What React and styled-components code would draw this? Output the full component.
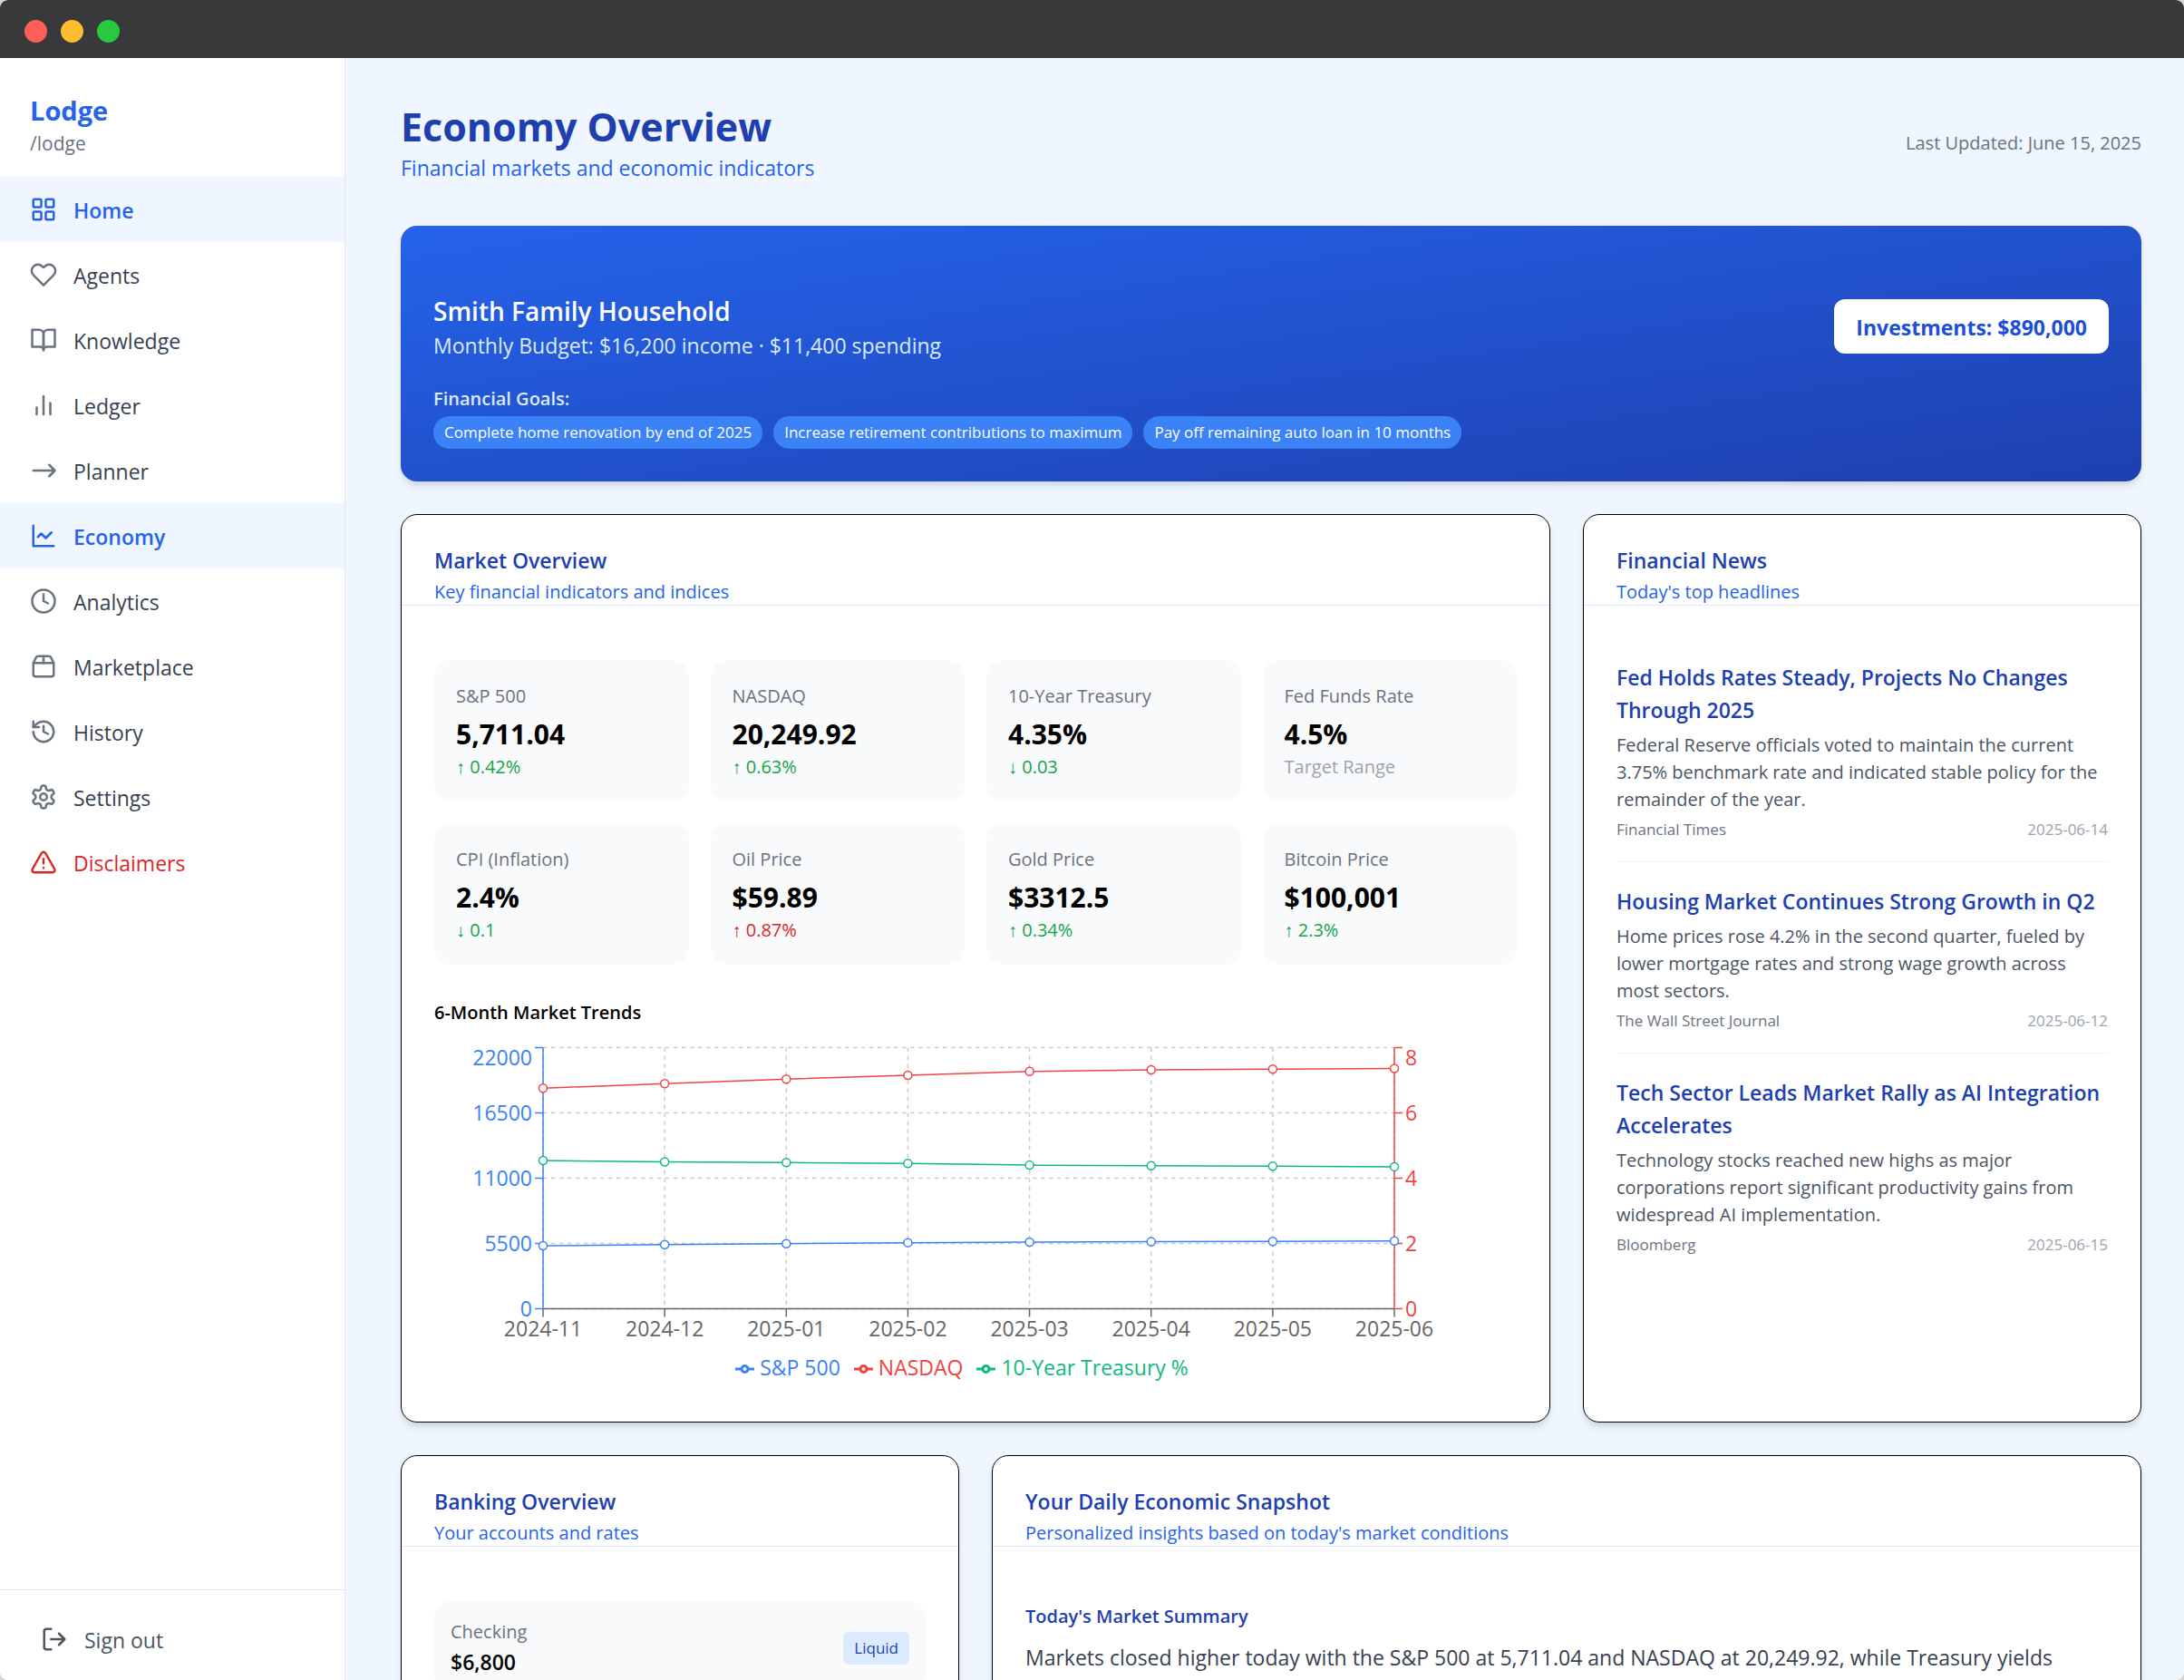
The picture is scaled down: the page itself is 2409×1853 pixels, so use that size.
import React from 'react';
import styled, { createGlobalStyle } from 'styled-components';

const GlobalStyle = createGlobalStyle`
  * {
    box-sizing: border-box;
  }

  body {
    margin: 0;
    background: #d4d4d4;
    color: #000;
    font-family: "Segoe UI", "Open Sans", "Noto Sans", sans-serif;
    font-size: 23px;
    line-height: 36px;
  }

  h1, h2, h3, h4, p, ul {
    margin: 0;
    padding: 0;
  }
`;

const Window = styled.div`
  display: flex;
  flex-direction: column;
  height: 100vh;
  overflow: hidden;
  border-radius: 9px;
  background: #fff;
`;

const TitleBar = styled.div`
  display: flex;
  flex: none;
  align-items: center;
  gap: 15px;
  height: 64px;
  padding: 4px 27px 0;
  background: #38393a;
`;

const WindowDot = styled.span`
  width: 25px;
  height: 25px;
  border-radius: 50%;
  background: ${props => props.$color};
`;

const Body = styled.div`
  display: flex;
  flex: 1;
  min-height: 0;
`;

const Sidebar = styled.aside`
  display: flex;
  flex-direction: column;
  flex: none;
  width: 381px;
  border-right: 1px solid #e5e7eb;
  background: #fff;
`;

const Brand = styled.div`
  padding: 37px 33px 22px;
`;

const BrandName = styled.div`
  color: #2563eb;
  font-size: 29px;
  font-weight: 700;
  line-height: 42px;
`;

const BrandPath = styled.div`
  color: #6b7280;
  font-size: 21px;
  line-height: 30px;
`;

const Nav = styled.nav`
  flex: 1;
`;

const navColors = {
  default: { text: "#374151", icon: "#6b7280", bg: "transparent" },
  active: { text: "#2563eb", icon: "#2563eb", bg: "#eff6ff" },
  danger: { text: "#dc2626", icon: "#dc2626", bg: "transparent" },
};

const NavLink = styled.a`
  display: flex;
  align-items: center;
  gap: 18px;
  height: 72px;
  padding: 0 33px;
  background: ${props => navColors[props.$kind].bg};
  color: ${props => navColors[props.$kind].text};
  font-weight: ${props => props.$kind === "active" ? 600 : 400};
  text-decoration: none;

  svg {
    color: ${props => navColors[props.$kind].icon};
  }
`;

const NavLabel = styled.span`
  padding-top: 2px;
`;

const IconSvg = styled.svg`
  flex: none;
  width: 30px;
  height: 30px;
  fill: none;
  stroke: currentColor;
  stroke-width: 2;
  stroke-linecap: round;
  stroke-linejoin: round;
`;

const SidebarFooter = styled.div`
  height: 100px;
  padding: 24px 33px;
  border-top: 1px solid #e5e7eb;
`;

const SignOutButton = styled.button`
  display: flex;
  align-items: center;
  gap: 18px;
  width: 100%;
  height: 60px;
  padding: 0 12px;
  border: none;
  background: none;
  color: #4b5563;
  font: inherit;
`;

const Main = styled.main`
  flex: 1;
  min-width: 0;
  padding: 49px 47px 48px 61px;
  overflow-y: auto;
  scrollbar-width: none;
  background: #eff6ff;
`;

const PageHeader = styled.header`
  display: flex;
  align-items: center;
  justify-content: space-between;
  margin-bottom: 46px;
`;

const PageTitle = styled.h1`
  color: #1e40af;
  font-size: 43px;
  font-weight: 700;
  line-height: 54px;
`;

const PageSubtitle = styled.p`
  color: #2563eb;
`;

const Updated = styled.div`
  color: #6b7280;
  font-size: 20px;
  line-height: 30px;
`;

const Banner = styled.section`
  margin-bottom: 36px;
  padding: 72px 36px 36px;
  border-radius: 18px;
  background: linear-gradient(to bottom right, #2563eb, #1e40af);
  box-shadow: 0 6px 9px -1px rgba(0, 0, 0, 0.1), 0 3px 6px -3px rgba(0, 0, 0, 0.1);
  color: #dbeafe;
`;

const BannerTop = styled.div`
  display: flex;
  align-items: center;
  justify-content: space-between;
  margin-bottom: 24px;
`;

const Household = styled.div`
  padding-top: 2px;
`;

const HouseholdName = styled.h2`
  color: #fff;
  font-size: 28px;
  font-weight: 600;
  line-height: 40px;
`;

const Investments = styled.div`
  padding: 13px 24px 11px;
  border-radius: 12px;
  background: #fff;
  color: #1d4ed8;
  font-weight: 700;
`;

const GoalsLabel = styled.h3`
  padding-top: 2px;
  margin-bottom: 4px;
  font-size: 20px;
  font-weight: 600;
  line-height: 30px;
`;

const Goals = styled.ul`
  display: flex;
  flex-wrap: wrap;
  gap: 12px;
  list-style: none;
`;

const Goal = styled.li`
  padding: 6px 12px;
  border-radius: 18px;
  background: #3b82f6;
  color: #fff;
  font-size: 17px;
  line-height: 24px;
`;

const Cards = styled.div`
  display: grid;
  grid-template-columns: repeat(3, minmax(0, 1fr));
  gap: 36px;
`;

const Card = styled.section`
  grid-column: span ${props => props.$span || 1};
  border: 1px solid #000;
  border-radius: 18px;
  background: #fff;
  box-shadow: 0 6px 9px -1px rgba(0, 0, 0, 0.1), 0 3px 6px -3px rgba(0, 0, 0, 0.1);
`;

const CardHeader = styled.header`
  padding: 38px 36px 0;
  border-bottom: 1px solid #dbeafe;
`;

const CardTitle = styled.h2`
  margin-bottom: 9px;
  color: #1e40af;
  font-size: 23px;
  font-weight: 600;
  line-height: 24px;
`;

const CardSubtitle = styled.p`
  color: #2563eb;
  font-size: 20px;
  line-height: 28px;
`;

const CardBody = styled.div`
  padding: 60px 36px 36px;
`;

const Stats = styled.div`
  display: grid;
  grid-template-columns: repeat(4, minmax(0, 1fr));
  gap: 24px;
  margin-bottom: 36px;
`;

const Stat = styled.div`
  padding: 25px 24px 23px;
  border-radius: 18px;
  background: #f9fafb;
  font-size: 20px;
  line-height: 30px;
`;

const Label = styled.div`
  color: #6b7280;
  font-size: 20px;
  line-height: 30px;
`;

const StatValue = styled.div`
  margin-top: 6px;
  font-size: 30px;
  font-weight: 700;
  line-height: 42px;
`;

const trendColors = {
  good: "#16a34a",
  bad: "#dc2626",
  muted: "#9ca3af",
};

const StatChange = styled.div`
  color: ${props => trendColors[props.$trend]};
`;

const SectionTitle = styled.h3`
  padding-top: 2px;
  margin-bottom: ${props => props.$blue ? 12 : 16}px;
  color: ${props => props.$blue ? "#1e40af" : "#000"};
  font-size: 20px;
  font-weight: 600;
  line-height: 30px;
`;

const ChartSvg = styled.svg`
  display: block;
  width: 100%;
  font-size: 23px;
`;

const Legend = styled.ul`
  display: flex;
  justify-content: center;
  gap: 15px;
  padding: 0 150px 6px 120px;
  list-style: none;
`;

const LegendItem = styled.li`
  display: flex;
  align-items: center;
  gap: 6px;
  color: ${props => props.$color};

  svg {
    width: 21px;
    height: 21px;
    fill: none;
    stroke: currentColor;
    stroke-width: 3;
  }
`;

const Article = styled.article`
  padding: 1px 0 23px;

  & + & {
    padding-top: 25px;
    border-top: 1px solid #f3f4f6;
  }
`;

const Headline = styled.h3`
  color: #1e40af;
  font-size: 23px;
  font-weight: 600;
`;

const Summary = styled.p`
  margin: 6px 0;
  color: #4b5563;
  font-size: 20px;
  line-height: 30px;
`;

const Byline = styled.div`
  display: flex;
  justify-content: space-between;
  color: #6b7280;
  font-size: 17px;
  line-height: 24px;

  time {
    color: #9ca3af;
  }
`;

const Account = styled.div`
  display: flex;
  align-items: center;
  justify-content: space-between;
  padding: 19px 18px 17px;
  border-radius: 18px;
  background: #f9fafb;
`;

const Balance = styled.div`
  font-weight: 600;
`;

const Tag = styled.span`
  padding: 6px 12px;
  border-radius: 6px;
  background: #dbeafe;
  color: #1e40af;
  font-size: 17px;
  line-height: 24px;
`;

const Paragraph = styled.p`
  color: #374151;
`;

const icons = {
  home: (
    <>
      <rect x="3" y="3" width="7" height="7" rx="1" />
      <rect x="14" y="3" width="7" height="7" rx="1" />
      <rect x="14" y="14" width="7" height="7" rx="1" />
      <rect x="3" y="14" width="7" height="7" rx="1" />
    </>
  ),
  heart: (
    <path d="M20.84 4.61a5.5 5.5 0 0 0-7.78 0L12 5.67l-1.06-1.06a5.5 5.5 0 0 0-7.78 7.78l1.06 1.06L12 21.23l7.78-7.78 1.06-1.06a5.5 5.5 0 0 0 0-7.78z" />
  ),
  book: (
    <>
      <path d="M2 3h6a4 4 0 0 1 4 4v14a3 3 0 0 0-3-3H2z" />
      <path d="M22 3h-6a4 4 0 0 0-4 4v14a3 3 0 0 1 3-3h7z" />
    </>
  ),
  bars: <path d="M18 20V10M12 20V4M6 20v-6" />,
  arrow: <path d="M3 12h19M17 7l5 5-5 5" />,
  line: (
    <>
      <path d="M3 3v18h18" />
      <path d="m19 9-5 5-4-4-3 3" />
    </>
  ),
  clock: (
    <>
      <circle cx="12" cy="12" r="10" />
      <path d="M12 6v6l4 2" />
    </>
  ),
  box: (
    <>
      <path d="M3 9h18v10a2 2 0 0 1-2 2H5a2 2 0 0 1-2-2V9Z" />
      <path d="m3 9 2.45-4.9A2 2 0 0 1 7.24 3h9.52a2 2 0 0 1 1.8 1.1L21 9" />
      <path d="M12 3v6" />
    </>
  ),
  history: (
    <>
      <path d="M3 12a9 9 0 1 0 9-9 9.75 9.75 0 0 0-6.74 2.74L3 8" />
      <path d="M3 3v5h5" />
      <path d="M12 7v5l4 2" />
    </>
  ),
  gear: (
    <>
      <path d="M12.22 2h-.44a2 2 0 0 0-2 2v.18a2 2 0 0 1-1 1.73l-.43.25a2 2 0 0 1-2 0l-.15-.08a2 2 0 0 0-2.73.73l-.22.38a2 2 0 0 0 .73 2.73l.15.1a2 2 0 0 1 1 1.72v.51a2 2 0 0 1-1 1.74l-.15.09a2 2 0 0 0-.73 2.73l.22.38a2 2 0 0 0 2.73.73l.15-.08a2 2 0 0 1 2 0l.43.25a2 2 0 0 1 1 1.73V20a2 2 0 0 0 2 2h.44a2 2 0 0 0 2-2v-.18a2 2 0 0 1 1-1.73l.43-.25a2 2 0 0 1 2 0l.15.08a2 2 0 0 0 2.73-.73l.22-.39a2 2 0 0 0-.73-2.73l-.15-.08a2 2 0 0 1-1-1.74v-.5a2 2 0 0 1 1-1.74l.15-.09a2 2 0 0 0 .73-2.73l-.22-.38a2 2 0 0 0-2.73-.73l-.15.08a2 2 0 0 1-2 0l-.43-.25a2 2 0 0 1-1-1.73V4a2 2 0 0 0-2-2z" />
      <circle cx="12" cy="12" r="3" />
    </>
  ),
  warning: (
    <>
      <path d="m21.73 18-8-14a2 2 0 0 0-3.48 0l-8 14A2 2 0 0 0 4 21h16a2 2 0 0 0 1.73-3Z" />
      <path d="M12 9v4M12 17h.01" />
    </>
  ),
  signOut: (
    <>
      <path d="M9 21H5a2 2 0 0 1-2-2V5a2 2 0 0 1 2-2h4" />
      <path d="m16 17 5-5-5-5M21 12H9" />
    </>
  ),
};

const Icon = ({ name }) => (
  <IconSvg viewBox="0 0 24 24" aria-hidden="true">{icons[name]}</IconSvg>
);

const navItems = [
  { label: "Home", icon: "home", kind: "active" },
  { label: "Agents", icon: "heart" },
  { label: "Knowledge", icon: "book" },
  { label: "Ledger", icon: "bars" },
  { label: "Planner", icon: "arrow" },
  { label: "Economy", icon: "line", kind: "active" },
  { label: "Analytics", icon: "clock" },
  { label: "Marketplace", icon: "box" },
  { label: "History", icon: "history" },
  { label: "Settings", icon: "gear" },
  { label: "Disclaimers", icon: "warning", kind: "danger" },
];

const goals = [
  "Complete home renovation by end of 2025",
  "Increase retirement contributions to maximum",
  "Pay off remaining auto loan in 10 months",
];

const stats = [
  { label: "S&P 500", value: "5,711.04", change: "↑ 0.42%", trend: "good" },
  { label: "NASDAQ", value: "20,249.92", change: "↑ 0.63%", trend: "good" },
  { label: "10-Year Treasury", value: "4.35%", change: "↓ 0.03", trend: "good" },
  { label: "Fed Funds Rate", value: "4.5%", change: "Target Range", trend: "muted" },
  { label: "CPI (Inflation)", value: "2.4%", change: "↓ 0.1", trend: "good" },
  { label: "Oil Price", value: "$59.89", change: "↑ 0.87%", trend: "bad" },
  { label: "Gold Price", value: "$3312.5", change: "↑ 0.34%", trend: "good" },
  { label: "Bitcoin Price", value: "$100,001", change: "↑ 2.3%", trend: "good" },
];

const news = [
  {
    title: "Fed Holds Rates Steady, Projects No Changes Through 2025",
    summary: "Federal Reserve officials voted to maintain the current 3.75% benchmark rate and indicated stable policy for the remainder of the year.",
    source: "Financial Times",
    date: "2025-06-14",
  },
  {
    title: "Housing Market Continues Strong Growth in Q2",
    summary: "Home prices rose 4.2% in the second quarter, fueled by lower mortgage rates and strong wage growth across most sectors.",
    source: "The Wall Street Journal",
    date: "2025-06-12",
  },
  {
    title: "Tech Sector Leads Market Rally as AI Integration Accelerates",
    summary: "Technology stocks reached new highs as major corporations report significant productivity gains from widespread AI implementation.",
    source: "Bloomberg",
    date: "2025-06-15",
  },
];

const months = ["2024-11", "2024-12", "2025-01", "2025-02", "2025-03", "2025-04", "2025-05", "2025-06"];

const series = [
  { name: "S&P 500", color: "#3b82f6", max: 22000, values: [5310, 5400, 5487, 5564, 5620, 5645, 5675, 5711] },
  { name: "NASDAQ", color: "#ef4444", max: 22000, values: [18580, 18960, 19340, 19670, 19990, 20130, 20190, 20249] },
  { name: "10-Year Treasury %", color: "#10b981", max: 8, values: [4.54, 4.5, 4.48, 4.45, 4.4, 4.38, 4.37, 4.35] },
];

const plot = { left: 120, right: 1059, top: 7.5, bottom: 295.5 };
const getX = i => plot.left + (plot.right - plot.left) * i / (months.length - 1);
const getY = ratio => plot.bottom - (plot.bottom - plot.top) * ratio;

const ValueAxis = ({ x, side, color, max }) => (
  <g stroke={color} strokeWidth="1.5">
    <line x1={x} x2={x} y1={plot.top} y2={plot.bottom} />
    {[0, 0.25, 0.5, 0.75, 1].map(ratio => (
      <g key={ratio}>
        <line x1={x} x2={x + side * 9} y1={getY(ratio)} y2={getY(ratio)} />
        <text
          x={x + side * 12}
          y={getY(ratio) + (ratio === 1 ? 19 : 8)}
          textAnchor={side < 0 ? "end" : "start"}
          fill={color}
          stroke="none"
        >
          {max * ratio}
        </text>
      </g>
    ))}
  </g>
);

const TrendChart = () => (
  <>
    <ChartSvg viewBox="0 0 1194 342" role="img" aria-label="6-Month Market Trends">
      <g stroke="#ccc" strokeWidth="1.5" strokeDasharray="4.5 4.5">
        {[0, 0.25, 0.5, 0.75, 1].map(ratio => (
          <line key={ratio} x1={plot.left} x2={plot.right} y1={getY(ratio)} y2={getY(ratio)} />
        ))}
        {months.map((month, i) => (
          <line key={month} x1={getX(i)} x2={getX(i)} y1={plot.top} y2={plot.bottom} />
        ))}
      </g>
      <g stroke="#666" strokeWidth="1.5">
        <line x1={plot.left} x2={plot.right} y1={plot.bottom} y2={plot.bottom} />
        {months.map((month, i) => (
          <g key={month}>
            <line x1={getX(i)} x2={getX(i)} y1={plot.bottom} y2={plot.bottom + 9} />
            <text x={getX(i)} y={plot.bottom + 30} textAnchor="middle" fill="#666" stroke="none">
              {month}
            </text>
          </g>
        ))}
      </g>
      <ValueAxis x={plot.left} side={-1} color="#3b82f6" max={22000} />
      <ValueAxis x={plot.right} side={1} color="#ef4444" max={8} />
      {series.map(({ name, color, max, values }) => (
        <g key={name} stroke={color} strokeWidth="1.5">
          <polyline
            fill="none"
            points={values.map((value, i) => `${getX(i)},${getY(value / max)}`).join(" ")}
          />
          {values.map((value, i) => (
            <circle key={i} cx={getX(i)} cy={getY(value / max)} r="4.5" fill="#fff" />
          ))}
        </g>
      ))}
    </ChartSvg>
    <Legend>
      {series.map(({ name, color }) => (
        <LegendItem key={name} $color={color}>
          <svg viewBox="0 0 21 21" aria-hidden="true">
            <path d="M0 12h7M14 12h7" />
            <circle cx="10.5" cy="12" r="3.5" />
          </svg>
          {name}
        </LegendItem>
      ))}
    </Legend>
  </>
);

const InfoCard = ({ title, subtitle, span, children }) => (
  <Card $span={span}>
    <CardHeader>
      <CardTitle>{title}</CardTitle>
      <CardSubtitle>{subtitle}</CardSubtitle>
    </CardHeader>
    <CardBody>{children}</CardBody>
  </Card>
);

export default function App() {
  return (
    <Window>
      <GlobalStyle />
      <TitleBar>
        <WindowDot $color="#ff5f57" />
        <WindowDot $color="#febc2e" />
        <WindowDot $color="#28c840" />
      </TitleBar>
      <Body>
        <Sidebar>
          <Brand>
            <BrandName>Lodge</BrandName>
            <BrandPath>/lodge</BrandPath>
          </Brand>
          <Nav>
            {navItems.map(({ label, icon, kind = "default" }) => (
              <NavLink key={label} href={`#${label.toLowerCase()}`} $kind={kind}>
                <Icon name={icon} />
                <NavLabel>{label}</NavLabel>
              </NavLink>
            ))}
          </Nav>
          <SidebarFooter>
            <SignOutButton type="button">
              <Icon name="signOut" />
              <NavLabel>Sign out</NavLabel>
            </SignOutButton>
          </SidebarFooter>
        </Sidebar>
        <Main>
          <PageHeader>
            <div>
              <PageTitle>Economy Overview</PageTitle>
              <PageSubtitle>Financial markets and economic indicators</PageSubtitle>
            </div>
            <Updated>Last Updated: June 15, 2025</Updated>
          </PageHeader>
          <Banner>
            <BannerTop>
              <Household>
                <HouseholdName>Smith Family Household</HouseholdName>
                <p>Monthly Budget: $16,200 income · $11,400 spending</p>
              </Household>
              <Investments>Investments: $890,000</Investments>
            </BannerTop>
            <GoalsLabel>Financial Goals:</GoalsLabel>
            <Goals>
              {goals.map(goal => <Goal key={goal}>{goal}</Goal>)}
            </Goals>
          </Banner>
          <Cards>
            <InfoCard span={2} title="Market Overview" subtitle="Key financial indicators and indices">
              <Stats>
                {stats.map(({ label, value, change, trend }) => (
                  <Stat key={label}>
                    <Label>{label}</Label>
                    <StatValue>{value}</StatValue>
                    <StatChange $trend={trend}>{change}</StatChange>
                  </Stat>
                ))}
              </Stats>
              <SectionTitle>6-Month Market Trends</SectionTitle>
              <TrendChart />
            </InfoCard>
            <InfoCard title="Financial News" subtitle="Today's top headlines">
              {news.map(({ title, summary, source, date }) => (
                <Article key={title}>
                  <Headline>{title}</Headline>
                  <Summary>{summary}</Summary>
                  <Byline>
                    <span>{source}</span>
                    <time dateTime={date}>{date}</time>
                  </Byline>
                </Article>
              ))}
            </InfoCard>
            <InfoCard title="Banking Overview" subtitle="Your accounts and rates">
              <Account>
                <div>
                  <Label>Checking</Label>
                  <Balance>$6,800</Balance>
                </div>
                <Tag>Liquid</Tag>
              </Account>
            </InfoCard>
            <InfoCard
              span={2}
              title="Your Daily Economic Snapshot"
              subtitle="Personalized insights based on today's market conditions"
            >
              <SectionTitle $blue>Today's Market Summary</SectionTitle>
              <Paragraph>
                Markets closed higher today with the S&P 500 at 5,711.04 and NASDAQ at 20,249.92, while Treasury yields
              </Paragraph>
            </InfoCard>
          </Cards>
        </Main>
      </Body>
    </Window>
  );
}
